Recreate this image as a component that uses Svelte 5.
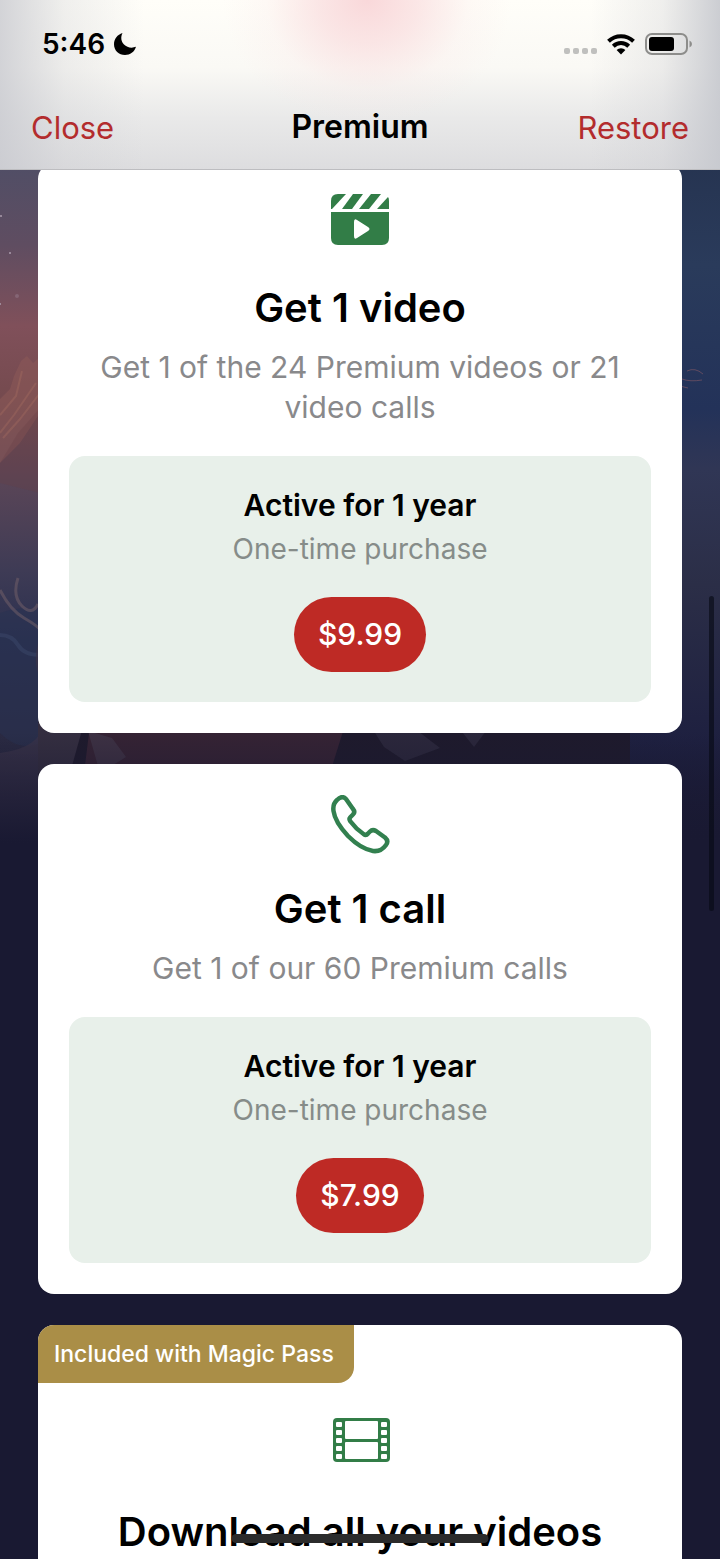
<script lang="ts">
  type Offer = {
    icon: 'video' | 'call' | 'film';
    title: string;
    text?: string;
    price?: string;
    badge?: string;
  };

  const offers: Offer[] = [
    {
      icon: 'video',
      title: 'Get 1 video',
      text: 'Get 1 of the 24 Premium videos or 21 video calls',
      price: '$9.99',
    },
    {
      icon: 'call',
      title: 'Get 1 call',
      text: 'Get 1 of our 60 Premium calls',
      price: '$7.99',
    },
    {
      icon: 'film',
      title: 'Download all your videos',
      badge: 'Included with Magic Pass',
    },
  ];

  const holes = [4, 12, 20, 28, 36];
</script>

<div class="screen">
  <header>
    <div class="status">
      <span class="time">5:46</span>
      <svg class="moon" viewBox="0 0 24 24" width="24" height="24" aria-hidden="true">
        <path d="M9.500 1C7.500 5 8 9.500 11 12.500C14 15.500 18.500 16.500 23 14.800C21.500 20 17 23 12 23C5.800 23 1 18.400 1 12.200C1 7 4.500 2.600 9.500 1Z" />
      </svg>
      <span class="signal" aria-hidden="true"><i></i><i></i><i></i><i></i></span>
      <svg class="wifi" viewBox="0 0 30 22" width="30" height="22" aria-hidden="true">
        <path d="M2.500 8.200A18 18 0 0 1 27.500 8.200" />
        <path d="M7.300 13.200A11 11 0 0 1 22.700 13.200" />
        <path class="dot" d="M10.600 17A6.300 6.300 0 0 1 19.400 17L15 21.500Z" />
      </svg>
      <svg class="battery" viewBox="0 0 48 22" width="48" height="22" aria-hidden="true">
        <rect class="shell" x="1" y="1" width="41" height="20" rx="6" />
        <rect x="4" y="4" width="25" height="14" rx="3" />
        <path class="tip" d="M44.500 7.500Q47 8.500 47 11Q47 13.500 44.500 14.500Z" />
      </svg>
    </div>
    <nav>
      <button class="link">Close</button>
      <h1>Premium</h1>
      <button class="link">Restore</button>
    </nav>
  </header>

  <main>
    <svg class="scene" viewBox="0 0 720 680" preserveAspectRatio="none" aria-hidden="true">
      <defs>
        <linearGradient id="dusk" x1="0" y1="0" x2="0" y2="1">
          <stop offset="0" stop-color="#504e66" />
          <stop offset=".12" stop-color="#5f4d61" />
          <stop offset=".24" stop-color="#80505a" />
          <stop offset=".35" stop-color="#744a4e" />
          <stop offset=".47" stop-color="#594557" />
          <stop offset=".6" stop-color="#3e3b55" />
          <stop offset=".7" stop-color="#2b304f" />
          <stop offset=".85" stop-color="#2a2a42" />
          <stop offset="1" stop-color="#191932" />
        </linearGradient>
        <linearGradient id="night" x1="0" y1="0" x2="0" y2="1">
          <stop offset="0" stop-color="#263451" />
          <stop offset=".15" stop-color="#2a3b5b" />
          <stop offset=".36" stop-color="#233259" />
          <stop offset=".45" stop-color="#303655" />
          <stop offset=".62" stop-color="#2b2e47" />
          <stop offset=".85" stop-color="#1e2040" />
          <stop offset="1" stop-color="#191932" />
        </linearGradient>
        <linearGradient id="fade" x1="0" y1="0" x2="0" y2="1">
          <stop offset="0" stop-color="#191932" stop-opacity="0" />
          <stop offset="1" stop-color="#191932" />
        </linearGradient>
      </defs>
      <rect width="360" height="680" fill="url(#dusk)" />
      <rect x="360" width="360" height="680" fill="url(#night)" />
      <path d="M0 236L10 226L14 213L21 198L27 193L33 200L40 194V250L20 280L0 300Z" fill="#8e5a58" opacity=".5" />
      <path d="M0 252L16 233L22 208M0 270L14 252L36 220M3 275L20 256L40 230" fill="none" stroke="#b07463" stroke-width="2" opacity=".3" />
      <path d="M0 300L18 270L40 245V330L0 320Z" fill="#663e46" opacity=".3" />
      <path d="M0 450Q22 442 40 448V580Q20 590 0 570Z" fill="#273151" opacity=".5" />
      <path d="M0 442Q10 462 24 470T40 482M18 430Q12 448 22 458T38 456" transform="translate(0 -15)" fill="none" stroke="#75616a" stroke-width="3" opacity=".5" />
      <path d="M0 464Q12 464 18 474T40 484" transform="translate(0 8)" fill="none" stroke="#3c4869" stroke-width="4" opacity=".5" />
      <path d="M38 480Q30 510 50 526L90 680H0V590Q40 585 44 560Z" fill="#3a3348" opacity=".7" />
      <rect x="38" y="558" width="592" height="60" fill="#1e1a2c" />
      <path d="M38 560H84L70 610H38Z" fill="#342e40" />
      <path d="M90 562L230 566L345 562L330 610H84Z" fill="#3b2637" opacity=".8" />
      <path d="M88 568L112 575L126 594L100 610Z" fill="#41384a" opacity=".7" />
      <path d="M370 562H410L440 585L405 598L384 584ZM455 560H492L474 584Z" fill="#302d42" opacity=".7" />
      <path d="M687 208Q695 204 703 211M682 216Q690 219 702 217M680 223L688 225" fill="none" stroke="#785464" stroke-width="1" opacity=".7" />
      <g fill="#ab9dac">
        <circle cx="1" cy="53" r="1" />
        <circle cx="10" cy="90" r="1" />
        <circle cx="17" cy="133" r="2" opacity=".3" />
        <circle cx="0" cy="141" r="1" />
      </g>
      <rect y="570" width="720" height="110" fill="url(#fade)" />
    </svg>

    <div class="offers">
      {#each offers as offer}
        <section class="card">
          {#if offer.badge}
            <span class="badge">{offer.badge}</span>
          {/if}
          <div class="content">
            {#if offer.icon === 'video'}
              <svg class="icon solid" viewBox="0 0 60 60" aria-hidden="true">
                <path d="M1 15V7Q1 0 8 0H16L2 15Z" />
                <path d="M23 0H33L22 15H12Z" />
                <path d="M41 0H51L39 15H29Z" />
                <path d="M58 3Q59 4 59 7V15H47Z" />
                <path fill-rule="evenodd" d="M1 18H59V44Q59 51 52 51H8Q1 51 1 44ZM24 28V42Q24 46 27 44L38 37Q41 35 38 33L27 26Q24 24 24 28Z" />
              </svg>
            {:else if offer.icon === 'call'}
              <svg class="icon outline" viewBox="0 0 60 60" aria-hidden="true">
                <path d="M7 5Q12 0 16 4L23 14Q25.500 17 23 19.500L20.500 22Q18.500 24 20.500 26.500Q26 34 33.500 39Q36 41 38 38.500L40 36.500Q42.500 34 46 36L55 42.500Q59 46 56 50Q51 57 43 56Q31 54 18 41Q5 27 3.500 16Q2.500 9 7 5Z" />
              </svg>
            {:else}
              <svg class="icon solid" viewBox="0 0 60 60" aria-hidden="true">
                <rect x="3" y="0" width="57" height="44" rx="4" />
                <g fill="#fff">
                  <rect x="15" y="3" width="33" height="18" rx="1" />
                  <rect x="15" y="24" width="33" height="17" rx="1" />
                  {#each holes as y}
                    <rect x="6" {y} width="6" height="5" rx="1" />
                    <rect x="51" {y} width="6" height="5" rx="1" />
                  {/each}
                </g>
              </svg>
            {/if}
            <h2>{offer.title}</h2>
            {#if offer.text}
              <p class="text">{offer.text}</p>
            {/if}
            {#if offer.price}
              <div class="plan">
                <strong>Active for 1 year</strong>
                <span>One-time purchase</span>
                <button class="buy">{offer.price}</button>
              </div>
            {/if}
          </div>
        </section>
      {/each}
    </div>
    <div class="scroll-thumb"></div>
  </main>

  <div class="home-bar"></div>
</div>

<style>
  :global(body) {
    background: #191932;
  }

  .screen {
    position: relative;
    display: flex;
    flex-direction: column;
    height: 100vh;
    overflow: hidden;
    font-family: Inter, "Liberation Sans", sans-serif;
    color: #000;
  }

  button {
    border: none;
    font-family: inherit;
    cursor: pointer;
  }

  h1, h2, p {
    margin: 0;
  }

  header {
    position: relative;
    z-index: 1;
    border-bottom: 1px solid #bdbdc0;
    background:
      radial-gradient(ellipse 20% 75% at 51% 0, #f9d8da, rgba(249, 218, 220, .65) 35%, rgba(250, 228, 228, .2) 70%, rgba(250, 230, 230, 0)),
      linear-gradient(to right, rgba(200, 201, 207, .8), rgba(205, 206, 210, .3) 9%, rgba(205, 206, 210, 0) 20%, rgba(205, 206, 210, 0) 82%, rgba(203, 204, 209, .3) 92%, rgba(198, 200, 206, .9)),
      linear-gradient(#fffef9, #faf9f5 40%, #e9e9e9 70%, #dddddf);
  }

  .status {
    display: flex;
    align-items: center;
    height: 88px;
    padding: 0 27px 0 42px;
  }

  .time {
    font-size: 28px;
    font-weight: 600;
  }

  .moon {
    margin-left: 8px;
  }

  .signal {
    display: flex;
    gap: 3px;
    margin: 14px 9px 0 auto;
  }

  .signal i {
    width: 6px;
    height: 6px;
    border-radius: 2px;
    background: #c0c0be;
  }

  .wifi {
    margin-right: 9px;
    fill: none;
    stroke: #000;
    stroke-width: 4;
  }

  .wifi .dot {
    fill: #000;
    stroke: none;
  }

  .battery .shell {
    fill: none;
    stroke: #8d8d8b;
    stroke-width: 2;
  }

  .battery .tip {
    fill: #8d8d8b;
  }

  nav {
    display: grid;
    grid-template-columns: 1fr auto 1fr;
    align-items: center;
    padding: 0 31px 3px;
    line-height: 78px;
  }

  h1 {
    font-size: 32px;
    font-weight: 600;
  }

  .link {
    justify-self: start;
    padding: 0;
    background: none;
    color: #b32c2d;
    font-size: 31px;
  }

  .link:last-child {
    justify-self: end;
  }

  main {
    position: relative;
    flex: 1;
    min-height: 0;
    margin-top: -7px;
    overflow: hidden;
  }

  .scene {
    position: absolute;
    inset: 0;
    width: 100%;
    height: 680px;
  }

  .offers {
    position: relative;
    display: flex;
    flex-direction: column;
    gap: 31px;
    padding: 0 38px;
  }

  .card {
    display: flex;
    flex-direction: column;
    border-radius: 16px;
    background: #fff;
    overflow: hidden;
  }

  .badge {
    align-self: flex-start;
    margin-bottom: 4px;
    padding: 0 20px 0 16px;
    border-radius: 0 0 16px 0;
    background: #aa8e47;
    color: #fff;
    font-size: 23px;
    font-weight: 500;
    line-height: 58px;
  }

  .content {
    display: flex;
    flex-direction: column;
    align-items: center;
    padding: 31px;
    text-align: center;
  }

  .icon {
    width: 60px;
    height: 60px;
  }

  .solid {
    fill: #327d47;
  }

  .outline {
    fill: none;
    stroke: #32804f;
    stroke-width: 4.5;
    stroke-linejoin: round;
  }

  h2 {
    margin-top: 28px;
    font-size: 40px;
    font-weight: 600;
    line-height: 52px;
  }

  .text {
    margin-top: 13px;
    padding: 0 30px;
    color: #89898b;
    font-size: 30px;
    line-height: 40px;
  }

  .plan {
    display: flex;
    flex-direction: column;
    align-items: center;
    align-self: stretch;
    margin-top: 29px;
    padding: 27px 30px 30px;
    border-radius: 16px;
    background: #e8f0ea;
    font-size: 28px;
    line-height: 44px;
  }

  .plan strong {
    font-size: 30px;
    font-weight: 600;
  }

  .plan span {
    color: #868c89;
  }

  .buy {
    margin-top: 26px;
    padding: 0 24px;
    border-radius: 38px;
    background: #be2a25;
    color: #fff;
    font-size: 30px;
    font-weight: 500;
    line-height: 75px;
  }

  .scroll-thumb {
    position: absolute;
    top: 433px;
    right: 6px;
    width: 5px;
    height: 315px;
    border-radius: 3px;
    background: rgba(8, 10, 22, .65);
  }

  .home-bar {
    position: absolute;
    bottom: 16px;
    left: 50%;
    width: 257px;
    height: 9px;
    border-radius: 5px;
    background: #2b2b2b;
    transform: translateX(-50%);
  }
</style>
